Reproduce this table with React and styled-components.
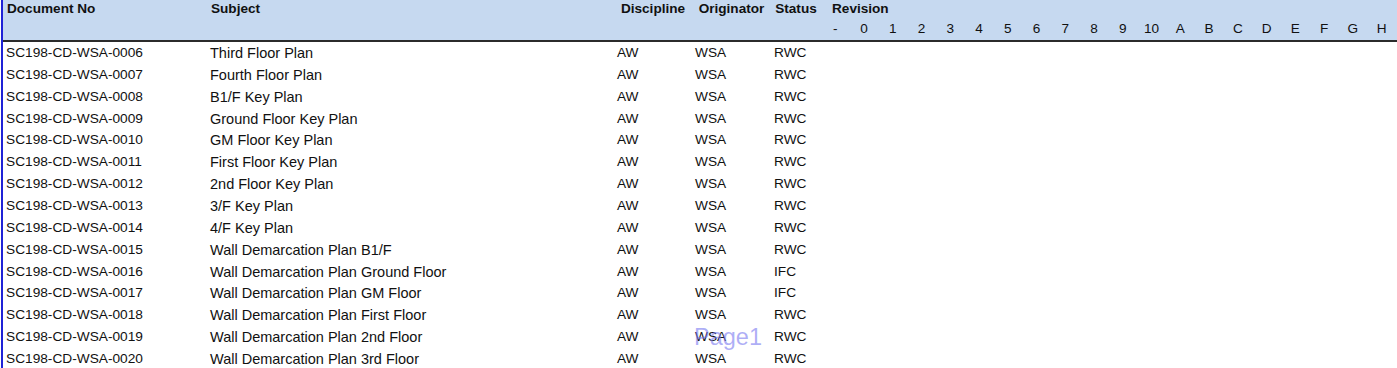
import React from "react";
import styled, { createGlobalStyle } from "styled-components";

const Global = createGlobalStyle`
  html, body { margin: 0; padding: 0; background: #ffffff; }
  body { font-family: "Liberation Sans", Arial, sans-serif; color: #111; overflow: hidden; }
`;

const COLS = "204px 407px 78px 79px 50px 1fr";

const Sheet = styled.div`
  position: relative;
  margin-left: 1px;
  border-left: 2px solid #1f22d6;
  height: 368px;
  overflow: hidden;
`;

const Header = styled.div`
  display: grid;
  grid-template-columns: ${COLS};
  grid-template-rows: 17px 23px;
  background: #c6d9f0;
  border-bottom: 2px solid #2b2b2b;
`;

const HeadCell = styled.div`
  grid-row: 1;
  font-weight: bold;
  font-size: 13.6px;
  line-height: 17px;
  text-align: ${(p) => (p.$center ? "center" : "left")};
  padding-left: ${(p) => (p.$center ? 0 : 4)}px;
  white-space: nowrap;
`;

const RevisionHead = styled.div`
  grid-row: 1 / span 2;
  display: grid;
  grid-template-rows: 17px 23px;
`;

const RevisionLabel = styled.div`
  font-weight: bold;
  font-size: 13.6px;
  line-height: 17px;
  padding-left: 11px;
`;

const RevisionCols = styled.div`
  display: grid;
  grid-template-columns: repeat(20, 28.75px);
`;

const RevCell = styled.div`
  text-align: center;
  font-size: 13.6px;
  line-height: 23px;
`;

const Body = styled.div`
  display: flex;
  flex-direction: column;
`;

const Row = styled.div`
  display: grid;
  grid-template-columns: ${COLS};
  height: 21.86px;
  align-items: center;
`;

const Cell = styled.div`
  padding-left: 3px;
  font-size: ${(p) => p.$size || 13.7}px;
  letter-spacing: ${(p) => p.$ls || 0}px;
  white-space: nowrap;
  line-height: 16px;
`;

const Watermark = styled.div`
  position: absolute;
  left: 691px;
  top: 323px;
  font-size: 23.5px;
  line-height: 28px;
  color: rgba(120, 120, 240, 0.6);
  pointer-events: none;
`;

const rows = [
  ["0006", "Third Floor Plan", "RWC"],
  ["0007", "Fourth Floor Plan", "RWC"],
  ["0008", "B1/F Key Plan", "RWC"],
  ["0009", "Ground Floor Key Plan", "RWC"],
  ["0010", "GM Floor Key Plan", "RWC"],
  ["0011", "First Floor Key Plan", "RWC"],
  ["0012", "2nd Floor Key Plan", "RWC"],
  ["0013", "3/F Key Plan", "RWC"],
  ["0014", "4/F Key Plan", "RWC"],
  ["0015", "Wall Demarcation Plan B1/F", "RWC"],
  ["0016", "Wall Demarcation Plan Ground Floor", "IFC"],
  ["0017", "Wall Demarcation Plan GM Floor", "IFC"],
  ["0018", "Wall Demarcation Plan First Floor", "RWC"],
  ["0019", "Wall Demarcation Plan 2nd Floor", "RWC"],
  ["0020", "Wall Demarcation Plan 3rd Floor", "RWC"],
];

const revisions = ["-", "0", "1", "2", "3", "4", "5", "6", "7", "8", "9", "10", "A", "B", "C", "D", "E", "F", "G", "H"];

export default function App() {
  return (
    <>
      <Global />
      <Sheet>
        <Header>
          <HeadCell>Document No</HeadCell>
          <HeadCell>Subject</HeadCell>
          <HeadCell $center>Discipline</HeadCell>
          <HeadCell $center>Originator</HeadCell>
          <HeadCell $center>Status</HeadCell>
          <RevisionHead>
            <RevisionLabel>Revision</RevisionLabel>
            <RevisionCols>
              {revisions.map((r) => (
                <RevCell key={r}>{r}</RevCell>
              ))}
            </RevisionCols>
          </RevisionHead>
        </Header>
        <Body>
          {rows.map(([n, subject, status]) => (
            <Row key={n}>
              <Cell $size={13.7}>SC198-CD-WSA-{n}</Cell>
              <Cell $size={14.5}>{subject}</Cell>
              <Cell>AW</Cell>
              <Cell>WSA</Cell>
              <Cell>{status}</Cell>
              <Cell />
            </Row>
          ))}
        </Body>
        <Watermark>Page1</Watermark>
      </Sheet>
    </>
  );
}
